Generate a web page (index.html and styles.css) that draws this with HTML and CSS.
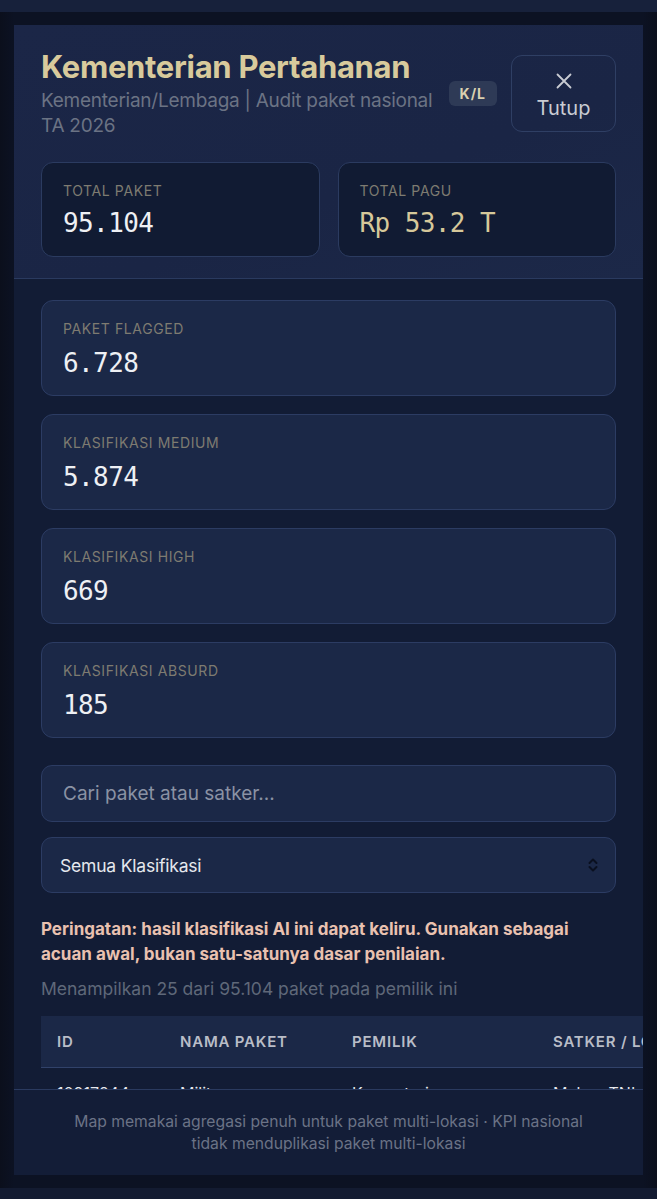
FILE: index.html
```html
<!DOCTYPE html>
<html lang="id">
<head>
    <meta charset="UTF-8">
    <meta name="viewport" content="width=device-width, initial-scale=1.0">
    <title>Kementerian Pertahanan</title>
    <link rel="stylesheet" href="styles.css">
</head>
<body>
    <div class="page-bar"></div>

    <div class="overlay">
        <div class="modal">
            <!-- Header -->
            <div class="modal-header">
                <div class="title-row">
                    <div class="title-block">
                        <h1>Kementerian Pertahanan</h1>
                        <p class="subtitle">Kementerian/Lembaga | Audit paket nasional TA 2026</p>
                    </div>
                    <span class="badge">K/L</span>
                    <button class="close-button">
                        <svg width="18" height="18" viewBox="0 0 18 18"><path d="M2.5 2.5L15.5 15.5M15.5 2.5L2.5 15.5" stroke="#c9ccd3" stroke-width="1.8" stroke-linecap="round"/></svg>
                        <span>Tutup</span>
                    </button>
                </div>
                <div class="stat-grid">
                    <div class="stat">
                        <div class="stat-label">Total Paket</div>
                        <div class="stat-value">95.104</div>
                    </div>
                    <div class="stat">
                        <div class="stat-label">Total Pagu</div>
                        <div class="stat-value gold">Rp 53.2 T</div>
                    </div>
                </div>
            </div>

            <!-- Body -->
            <div class="modal-body">
                <div class="card">
                    <div class="stat-label">Paket Flagged</div>
                    <div class="card-value">6.728</div>
                </div>
                <div class="card">
                    <div class="stat-label">Klasifikasi Medium</div>
                    <div class="card-value">5.874</div>
                </div>
                <div class="card">
                    <div class="stat-label">Klasifikasi High</div>
                    <div class="card-value">669</div>
                </div>
                <div class="card">
                    <div class="stat-label">Klasifikasi Absurd</div>
                    <div class="card-value">185</div>
                </div>

                <input class="search" type="text" placeholder="Cari paket atau satker...">

                <div class="select">
                    <span>Semua Klasifikasi</span>
                    <svg width="12" height="16" viewBox="0 0 12 16"><path d="M2.5 6L6 2.5L9.5 6M2.5 10L6 13.5L9.5 10" fill="none" stroke="#0a1020" stroke-width="2" stroke-linecap="round" stroke-linejoin="round"/></svg>
                </div>

                <p class="warning">Peringatan: hasil klasifikasi AI ini dapat keliru. Gunakan sebagai acuan awal, bukan satu-satunya dasar penilaian.</p>
                <p class="count">Menampilkan 25 dari 95.104 paket pada pemilik ini</p>

                <div class="table-wrap">
                    <table>
                        <thead>
                            <tr>
                                <th class="col-id">ID</th>
                                <th class="col-name">Nama Paket</th>
                                <th class="col-owner">Pemilik</th>
                                <th class="col-satker">Satker / Lokasi</th>
                            </tr>
                        </thead>
                        <tbody>
                            <tr>
                                <td>10917244</td>
                                <td>Militer</td>
                                <td>Kementerian</td>
                                <td>Mabes TNI</td>
                            </tr>
                        </tbody>
                    </table>
                </div>
            </div>

            <!-- Footer -->
            <div class="modal-footer">
                Map memakai agregasi penuh untuk paket multi-lokasi · KPI nasional tidak menduplikasi paket multi-lokasi
            </div>
        </div>
    </div>

    <div class="page-bar bottom"></div>
</body>
</html>
```

FILE: styles.css
```css
* {
    box-sizing: border-box;
}
body {
    margin: 0;
    height: 1199px;
    overflow: hidden;
    background: #0a0f1d;
    font-family: Inter, "Noto Sans", sans-serif;
    display: flex;
    flex-direction: column;
}
.page-bar {
    height: 12px;
    background: #17213b;
}
.page-bar.bottom {
    height: 11px;
    background: #131b31;
}
.overlay {
    flex: 1;
    padding: 13px 14px;
    background: linear-gradient(90deg, #0b0f1c 0, #0c1223 14px, #0c1223 643px, #0b0f1c 100%);
}
.modal {
    height: 1150px;
    display: flex;
    flex-direction: column;
    background: #111a32;
    overflow: hidden;
}

/* Header */
.modal-header {
    padding: 23px 27px 21px;
    background: linear-gradient(160deg, #1b2647 0%, #1a2545 60%, #1c2848 100%);
    border-bottom: 1px solid #2a3a5f;
}
.title-row {
    display: flex;
    align-items: center;
    gap: 12px;
}
.title-block {
    flex: 1;
}
h1 {
    margin: 0;
    font-size: 31px;
    line-height: 38px;
    font-weight: 700;
    letter-spacing: -0.3px;
    color: #d8ca9c;
}
.subtitle {
    margin: 2px 0 0;
    font-size: 19px;
    line-height: 25px;
    color: #6b7384;
    letter-spacing: -0.25px;
}
.badge {
    padding: 4px 11px;
    border-radius: 6px;
    background: #2e3a56;
    color: #d9d0b0;
    font-size: 14px;
    font-weight: 700;
    letter-spacing: 1px;
    line-height: 17px;
}
.close-button {
    width: 105px;
    height: 77px;
    margin-left: 2px;
    padding: 5px 0 0;
    display: flex;
    flex-direction: column;
    align-items: center;
    justify-content: center;
    gap: 6px;
    background: transparent;
    border: 1px solid #2f3f64;
    border-radius: 11px;
    color: #c9ccd3;
    font-family: inherit;
    font-size: 20px;
    line-height: 24px;
}
.stat-grid {
    display: grid;
    grid-template-columns: 1fr 1fr;
    gap: 18px;
    margin-top: 24px;
}
.stat {
    height: 95px;
    padding: 19px 21px;
    background: #111b33;
    border: 1px solid #2b3b60;
    border-radius: 12px;
}
.stat-label {
    font-size: 14px;
    line-height: 18px;
    text-transform: uppercase;
    letter-spacing: 0.6px;
    color: #7e7b71;
}
.stat-value {
    margin-top: 8px;
    font-family: "DejaVu Sans Mono", "Liberation Mono", monospace;
    font-size: 26px;
    line-height: 30px;
    letter-spacing: -0.6px;
    color: #eef0f4;
}
.stat-value.gold {
    color: #d6c89a;
}

/* Body */
.modal-body {
    flex: 1;
    overflow: hidden;
    padding: 21px 0 0 27px;
    background: #121c35;
}
.card {
    height: 96px;
    margin-right: 27px;
    margin-bottom: 18px;
    padding: 19px 21px;
    background: #1b2847;
    border: 1px solid #2c3c63;
    border-radius: 12px;
}
.card-value {
    margin-top: 10px;
    font-family: "DejaVu Sans Mono", "Liberation Mono", monospace;
    font-size: 26px;
    line-height: 30px;
    letter-spacing: -0.6px;
    color: #eef0f4;
}
.search {
    display: block;
    width: calc(100% - 27px);
    height: 57px;
    margin-top: 27px;
    padding: 0 21px;
    background: #1b2847;
    border: 1px solid #2c3c63;
    border-radius: 11px;
    font-family: inherit;
    font-size: 19px;
    color: #eef0f4;
    outline: none;
}
.search::placeholder {
    color: #8a92a4;
}
.select {
    height: 56px;
    margin: 15px 27px 0 0;
    padding: 0 16px 0 18px;
    display: flex;
    align-items: center;
    justify-content: space-between;
    background: #1b2847;
    border: 1px solid #2c3c63;
    border-radius: 11px;
    font-size: 17.5px;
    color: #e6e8ee;
    letter-spacing: -0.2px;
}
.warning {
    margin: 24px 27px 0 0;
    font-size: 17px;
    line-height: 25px;
    font-weight: 700;
    color: #e9c1b0;
}
.count {
    margin: 9px 0 0;
    font-size: 17.5px;
    line-height: 25px;
    color: #5f6879;
}
.table-wrap {
    margin-top: 15px;
    overflow: hidden;
}
table {
    width: 900px;
    border-collapse: collapse;
    table-layout: fixed;
}
th {
    height: 51px;
    padding: 0 16px;
    text-align: left;
    background: #1b2847;
    border-bottom: 1px solid #31426a;
    font-size: 15px;
    font-weight: 600;
    letter-spacing: 0.8px;
    text-transform: uppercase;
    color: #b9bdc7;
}
td {
    padding: 15px 16px 16px;
    font-size: 16px;
    color: #e6e8ee;
}
.col-id { width: 123px; }
.col-name { width: 172px; }
.col-owner { width: 201px; }

/* Footer */
.modal-footer {
    height: 86px;
    padding: 21px 55px 0;
    background: #131d37;
    border-top: 1px solid #2a3a5f;
    text-align: center;
    font-size: 15.7px;
    line-height: 22px;
    color: #6b7386;
}
```
